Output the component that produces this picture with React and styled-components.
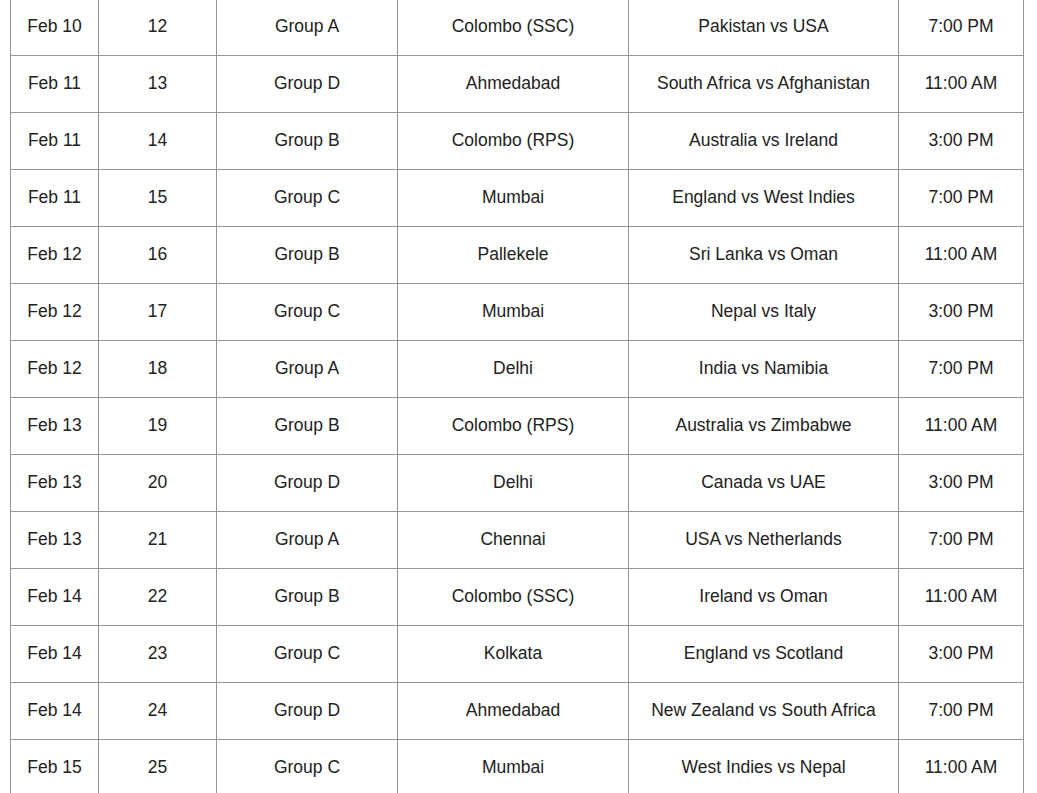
import React from "react";
import styled, { createGlobalStyle } from "styled-components";

const Global = createGlobalStyle`
  html, body { margin: 0; padding: 0; background: #fff; overflow: hidden; }
  body { font-family: "Liberation Sans", Arial, sans-serif; }
`;

const Page = styled.div`
  padding: 0 14px 0 10px;
  margin-top: -2px;
`;

const Table = styled.table`
  border-collapse: collapse;
  table-layout: fixed;
  width: 1013px;
  font-family: "Liberation Sans", Arial, sans-serif;
  font-size: 17.5px;
  color: #222;
`;

const Cell = styled.td`
  border: 1px solid #959595;
  height: 56px;
  padding: 0 4px 3px;
  box-sizing: border-box;
  text-align: center;
  vertical-align: middle;
  white-space: nowrap;
  line-height: 22px;
`;

const Row = styled.tr`
  height: 57px;
`;

const cols = [88, 118, 181, 231, 270, 125];

const rows = [
  ["Feb 10", "12", "Group A", "Colombo (SSC)", "Pakistan vs USA", "7:00 PM"],
  ["Feb 11", "13", "Group D", "Ahmedabad", "South Africa vs Afghanistan", "11:00 AM"],
  ["Feb 11", "14", "Group B", "Colombo (RPS)", "Australia vs Ireland", "3:00 PM"],
  ["Feb 11", "15", "Group C", "Mumbai", "England vs West Indies", "7:00 PM"],
  ["Feb 12", "16", "Group B", "Pallekele", "Sri Lanka vs Oman", "11:00 AM"],
  ["Feb 12", "17", "Group C", "Mumbai", "Nepal vs Italy", "3:00 PM"],
  ["Feb 12", "18", "Group A", "Delhi", "India vs Namibia", "7:00 PM"],
  ["Feb 13", "19", "Group B", "Colombo (RPS)", "Australia vs Zimbabwe", "11:00 AM"],
  ["Feb 13", "20", "Group D", "Delhi", "Canada vs UAE", "3:00 PM"],
  ["Feb 13", "21", "Group A", "Chennai", "USA vs Netherlands", "7:00 PM"],
  ["Feb 14", "22", "Group B", "Colombo (SSC)", "Ireland vs Oman", "11:00 AM"],
  ["Feb 14", "23", "Group C", "Kolkata", "England vs Scotland", "3:00 PM"],
  ["Feb 14", "24", "Group D", "Ahmedabad", "New Zealand vs South Africa", "7:00 PM"],
  ["Feb 15", "25", "Group C", "Mumbai", "West Indies vs Nepal", "11:00 AM"],
];

export default function App() {
  return (
    <Page>
      <Global />
      <Table>
        <colgroup>
          {cols.map((w, i) => (
            <col key={i} style={{ width: w }} />
          ))}
        </colgroup>
        <tbody>
          {rows.map((r, i) => (
            <Row key={i}>
              {r.map((c, j) => (
                <Cell key={j}>{c}</Cell>
              ))}
            </Row>
          ))}
        </tbody>
      </Table>
    </Page>
  );
}
